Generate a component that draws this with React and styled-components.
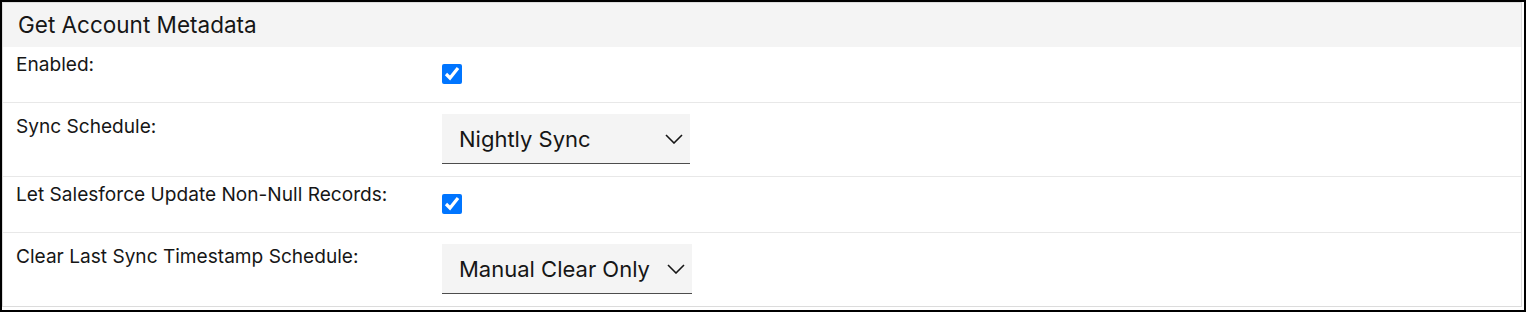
import React from "react";
import styled, { createGlobalStyle } from "styled-components";

const Global = createGlobalStyle`
  html, body { margin: 0; padding: 0; background: #fff; }
  body { font-family: Inter, "Noto Sans", "Liberation Sans", sans-serif; color: #161616; }
  * { box-sizing: border-box; }
`;

const Frame = styled.div`
  width: 1526px;
  height: 312px;
  border: 2px solid #000;
  padding: 0 2px 3px 0;
  background: #fff;
  display: flex;
`;

const Panel = styled.section`
  flex: 1;
  border: 1px solid #dcdcdc;
  display: flex;
  flex-direction: column;
  background: #fff;
`;

const Header = styled.h2`
  margin: 0;
  height: 47px;
  display: flex;
  align-items: center;
  padding: 0 15px 2px;
  background: #f4f4f4;
  font-size: 22.5px;
  font-weight: 400;
  color: #161616;
`;

const Row = styled.div`
  display: grid;
  grid-template-columns: 439px 1fr;
  border-bottom: ${(p) => (p.$last ? "none" : "1px solid #e8e8e8")};
`;

const Label = styled.label`
  padding: ${(p) => (p.$tall ? "12px" : "6px")} 0 0 13px;
  font-size: 19.1px;
  line-height: 23px;
  color: #161616;
`;

const Value = styled.div`
  display: flex;
  align-items: flex-start;
  padding: ${(p) => (p.$tall ? "11px 0 12px" : "17px 0 18px")};
`;

const Check = styled.input.attrs({ type: "checkbox" })`
  width: 20px;
  height: 20px;
  margin: 0;
  accent-color: #0075ff;
`;

const SelectWrap = styled.div`
  position: relative;
  width: ${(p) => p.$width}px;
  height: 50px;
`;

const Select = styled.select`
  appearance: none;
  -webkit-appearance: none;
  width: 100%;
  height: 50px;
  margin: 0;
  padding: 0 40px 0 17px;
  border: none;
  border-bottom: 1px solid #4d4d4d;
  border-radius: 0;
  background: #f4f4f4;
  font-family: Inter, "Noto Sans", "Liberation Sans", sans-serif;
  font-size: 22px;
  color: #161616;
  outline: none;
`;

const Chevron = styled.svg`
  position: absolute;
  right: 7px;
  top: 20px;
  width: 18px;
  height: 10px;
  pointer-events: none;
`;

function Dropdown({ width, value, options }) {
  return (
    <SelectWrap $width={width}>
      <Select defaultValue={value}>
        {options.map((o) => (
          <option key={o}>{o}</option>
        ))}
      </Select>
      <Chevron viewBox="0 0 18 10" fill="none">
        <path d="M1 1 L9 9 L17 1" stroke="#161616" strokeWidth="1.6" />
      </Chevron>
    </SelectWrap>
  );
}

export default function App() {
  return (
    <>
      <Global />
      <Frame>
        <Panel>
          <Header>Get Account Metadata</Header>
          <Row>
            <Label>Enabled:</Label>
            <Value>
              <Check defaultChecked />
            </Value>
          </Row>
          <Row>
            <Label $tall>Sync Schedule:</Label>
            <Value $tall>
              <Dropdown
                width={248}
                value="Nightly Sync"
                options={["Nightly Sync", "Hourly Sync", "Manual Sync"]}
              />
            </Value>
          </Row>
          <Row>
            <Label>Let Salesforce Update Non-Null Records:</Label>
            <Value>
              <Check defaultChecked />
            </Value>
          </Row>
          <Row $last>
            <Label $tall>Clear Last Sync Timestamp Schedule:</Label>
            <Value $tall>
              <Dropdown
                width={250}
                value="Manual Clear Only"
                options={["Manual Clear Only", "Nightly Clear", "Weekly Clear"]}
              />
            </Value>
          </Row>
        </Panel>
      </Frame>
    </>
  );
}
